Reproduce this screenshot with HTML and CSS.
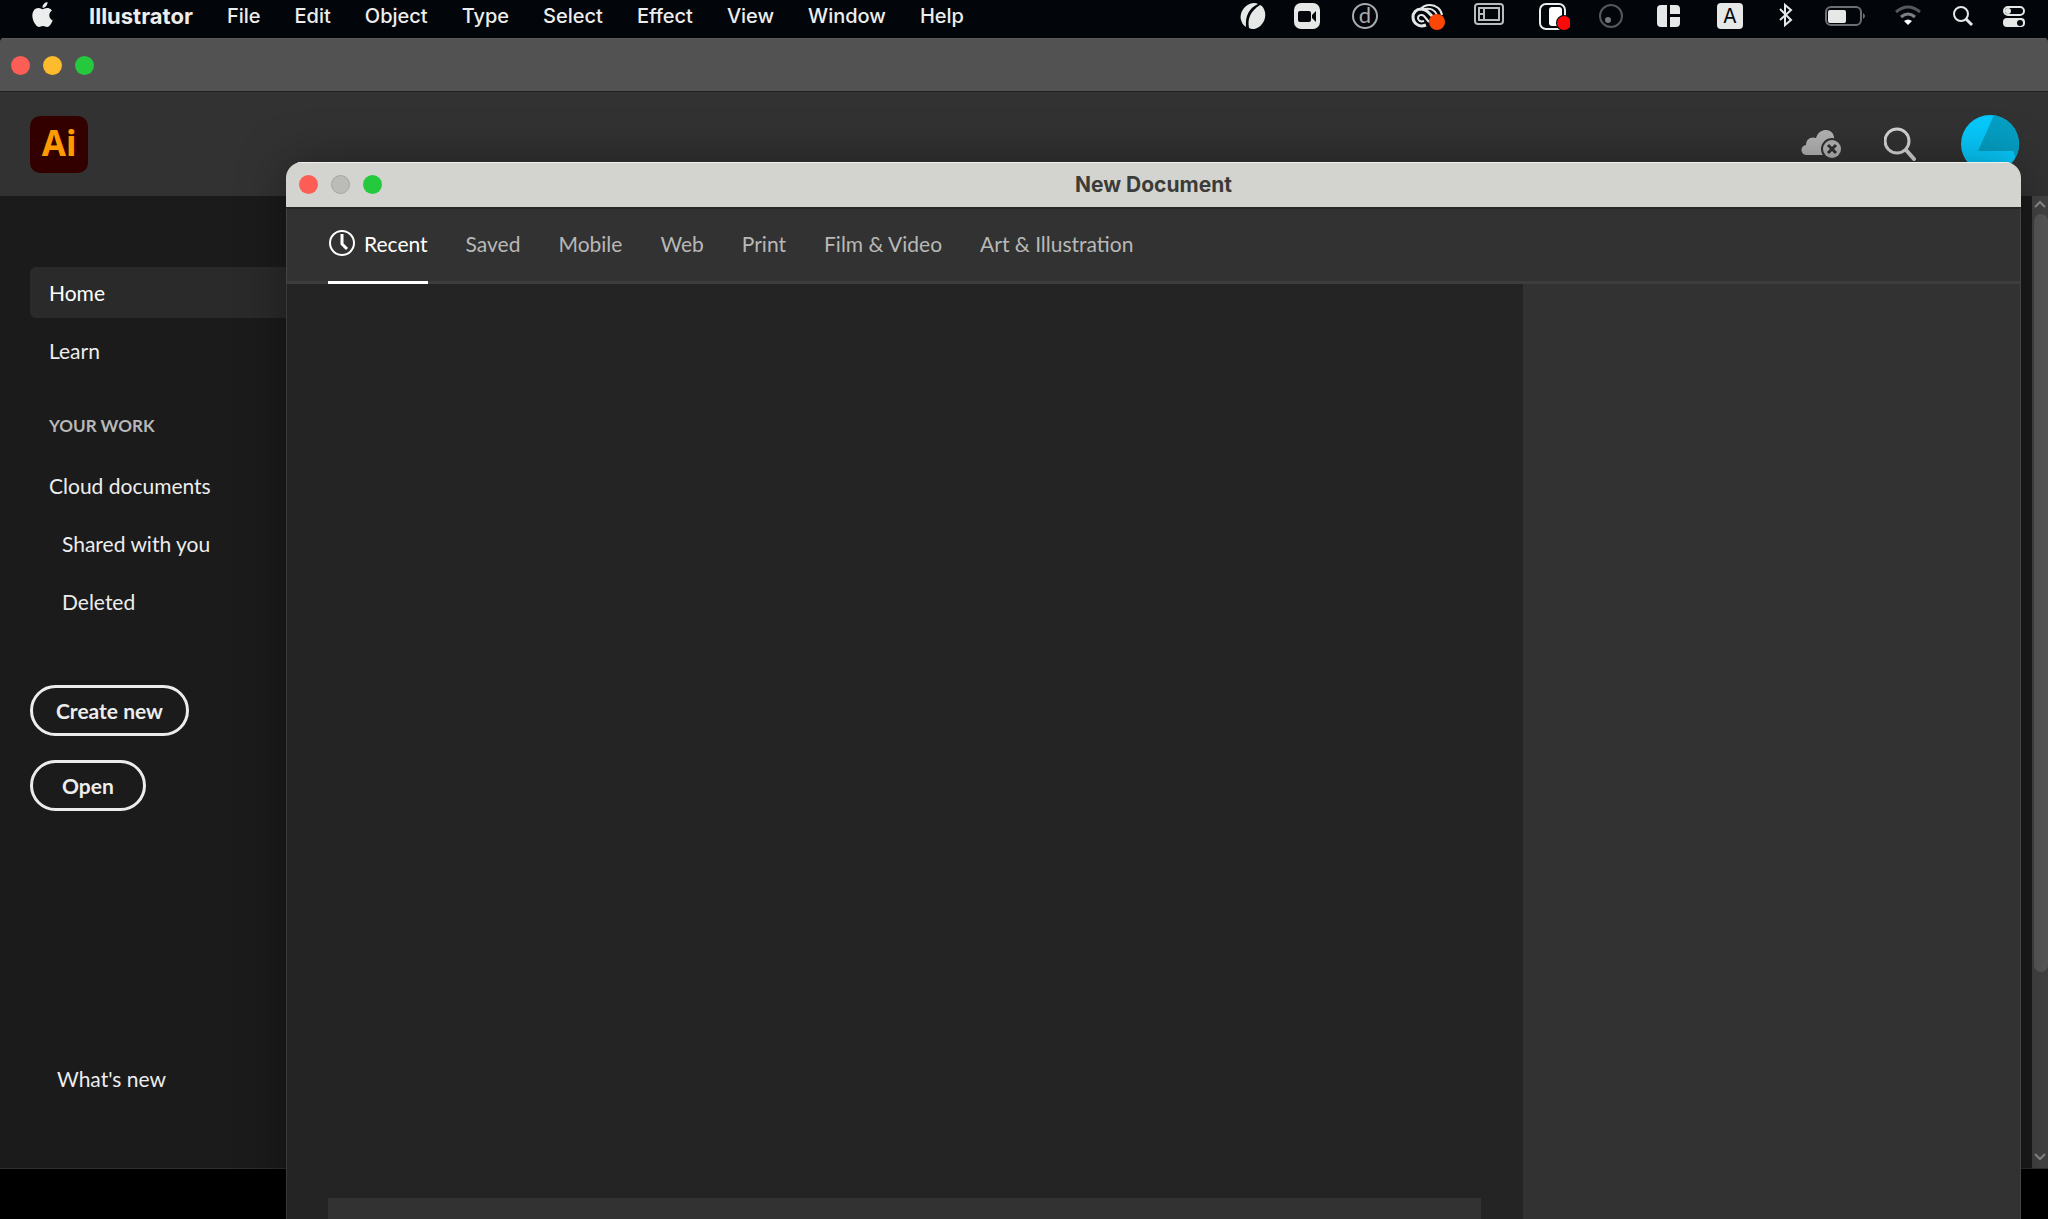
FILE: index.html
```html
<!DOCTYPE html>
<html lang="en">
<head>
  <meta charset="UTF-8" />
  <meta name="viewport" content="width=device-width, initial-scale=1.0" />
  <title>Illustrator</title>
  <link rel="stylesheet" href="styles.css">
</head>
<body>
  <header class="menubar">
    <nav class="menus">
      <button class="menu" aria-label="Apple">
        <svg width="25" height="25" viewBox="0 0 24 24" fill="#eceeee"><path d="M12.152 6.896c-.948 0-2.415-1.078-3.96-1.04-2.04.027-3.91 1.183-4.961 3.014-2.117 3.675-.546 9.103 1.519 12.09 1.013 1.454 2.208 3.09 3.792 3.039 1.52-.065 2.09-.987 3.935-.987 1.831 0 2.35.987 3.96.948 1.637-.026 2.676-1.48 3.676-2.948 1.156-1.688 1.636-3.325 1.662-3.415-.039-.013-3.182-1.221-3.22-4.857-.026-3.04 2.48-4.494 2.597-4.559-1.429-2.09-3.623-2.324-4.39-2.376-2-.156-3.675 1.09-4.61 1.09zM15.53 3.83c.843-1.012 1.4-2.427 1.245-3.83-1.207.052-2.662.805-3.532 1.818-.78.896-1.454 2.338-1.273 3.714 1.338.104 2.715-.688 3.559-1.701"/></svg>
      </button>
      <button class="menu app-name">Illustrator</button>
      <button class="menu">File</button>
      <button class="menu">Edit</button>
      <button class="menu">Object</button>
      <button class="menu">Type</button>
      <button class="menu">Select</button>
      <button class="menu">Effect</button>
      <button class="menu">View</button>
      <button class="menu">Window</button>
      <button class="menu">Help</button>
    </nav>

    <div class="status">
      <!-- leaf -->
      <svg width="26" height="32" viewBox="0 0 26 32" fill="#e6e8e8">
        <path d="M18 4C15 2 9 3 5 7c-4 4-5 9-4 13 1 3 2 5 5 7C5 16 9 8 18 4z"/>
        <path d="M20 5C11 11 7 18 9 28c3 2 7 1 10-1 5-4 7-9 6-15-1-3-2-6-5-7z"/>
      </svg>
      <!-- video call -->
      <svg width="28" height="32" viewBox="0 0 28 32">
        <rect x="0" y="3" width="26" height="26" rx="7" fill="#e6e8e8"/>
        <rect x="4" y="11" width="13" height="11" rx="2" fill="#05070c"/>
        <path d="M18 15l4-4v11l-4-4z" fill="#05070c"/>
      </svg>
      <!-- d in a ring -->
      <svg width="32" height="32" viewBox="0 0 32 32">
        <circle cx="15" cy="16" r="12" fill="none" stroke="#a9abad" stroke-width="2"/>
        <text class="ring-letter" x="15" y="23" text-anchor="middle">d</text>
      </svg>
      <!-- creative cloud -->
      <svg width="36" height="32" viewBox="0 0 36 32" fill="none">
        <path d="M10 10C12 7 16 5 20 5c6 0 11 4 12 10" stroke="#e6e8e8" stroke-width="2"/>
        <path d="M16 25c-7 3-13-2-13-8 0-4 3-8 8-8 3 0 5 1 7 3l5 5" stroke="#e6e8e8" stroke-width="3"/>
        <path d="M19 22l-5-6c-2-2-6-1-6 2s3 4 6 3M15 9c5-1 10 1 12 6" stroke="#e6e8e8" stroke-width="2"/>
        <circle cx="27" cy="22" r="8" fill="#fb4705"/>
      </svg>
      <!-- display -->
      <svg width="30" height="32" viewBox="0 0 30 32" fill="none" stroke="#b9bbbd" stroke-width="2">
        <rect x="1" y="4" width="28" height="20" rx="3"/>
        <rect x="5" y="8" width="20" height="12"/>
        <path d="M10 8v12M6 14h3"/>
      </svg>
      <!-- recorder -->
      <svg width="38" height="32" viewBox="0 0 38 32">
        <rect x="8" y="4" width="25" height="25" rx="6" fill="none" stroke="#eceeee" stroke-width="2"/>
        <rect x="17" y="7" width="13" height="19" rx="3" fill="#fff"/>
        <circle cx="32" cy="23" r="8" fill="#05070c"/>
        <circle cx="32" cy="23" r="7" fill="#fb0a0a"/>
      </svg>
      <!-- dial -->
      <svg width="26" height="32" viewBox="0 0 26 32">
        <circle cx="13" cy="16" r="11" fill="none" stroke="#55575d" stroke-width="2"/>
        <circle cx="10" cy="20" r="3" fill="#76787e"/>
      </svg>
      <!-- tiles -->
      <svg width="32" height="32" viewBox="0 0 32 32" fill="#e6e8e8">
        <path d="M9 5h6v22H9a4 4 0 0 1-4-4V9a4 4 0 0 1 4-4zM18 5h6a4 4 0 0 1 4 4v5H18zM18 17h10v6a4 4 0 0 1-4 4h-6z"/>
      </svg>
      <!-- input source -->
      <svg width="36" height="32" viewBox="0 0 36 32">
        <rect x="5" y="3" width="26" height="26" rx="4" fill="#e6e8e8"/>
        <text class="source-letter" x="18" y="23" text-anchor="middle">A</text>
      </svg>
      <!-- bluetooth -->
      <svg width="20" height="32" viewBox="0 0 20 32" fill="none" stroke="#e6e8e8" stroke-width="2">
        <path d="M4 9l11 11-6 5V5l6 5L4 20"/>
      </svg>
      <!-- battery -->
      <svg width="42" height="32" viewBox="0 0 42 32">
        <rect x="2" y="7" width="35" height="18" rx="5" fill="none" stroke="#6d6f74" stroke-width="2"/>
        <rect x="4" y="10" width="18" height="13" rx="2" fill="#e6e8e8"/>
        <path d="M39 13q4 3 0 6z" fill="#6d6f74"/>
      </svg>
      <!-- wifi -->
      <svg width="28" height="32" viewBox="0 0 28 32" fill="none" stroke-width="3">
        <path d="M2 12q12-10 24 0" stroke="#55575d"/>
        <path d="M7 17q7-6 14 0" stroke="#7e8085"/>
        <path d="M14 25l-4-4q4-3 8 0z" fill="#fff"/>
      </svg>
      <!-- search -->
      <svg width="24" height="32" viewBox="0 0 24 32" fill="none" stroke="#e6e8e8" stroke-width="2">
        <circle cx="11" cy="14" r="7"/>
        <path d="M16 19l6 6" stroke-width="3"/>
      </svg>
      <!-- control centre -->
      <svg width="24" height="32" viewBox="0 0 24 32">
        <rect x="2" y="7" width="20" height="8" rx="4" fill="none" stroke="#e6e8e8" stroke-width="2"/>
        <circle cx="6" cy="11" r="3" fill="#e6e8e8"/>
        <rect x="1" y="18" width="22" height="9" rx="4" fill="#e6e8e8"/>
        <circle cx="18" cy="23" r="3" fill="#05070c"/>
      </svg>
    </div>
  </header>

  <main class="app-window">
    <div class="titlebar">
      <button class="light red" aria-label="Close"></button>
      <button class="light yellow" aria-label="Minimize"></button>
      <button class="light green" aria-label="Zoom"></button>
    </div>

    <div class="app-header">
      <div class="logo">Ai</div>
      <div class="header-tools">
        <button class="tool" aria-label="Cloud storage status">
          <svg width="40" height="34" viewBox="0 0 40 34">
            <path d="M6 28a5 5 0 0 1-1-10c0-6 5-9 10-7C17 5 21 3 25 3c6 0 9 5 8 11v14z" fill="#b4b4b4"/>
            <circle cx="31" cy="22" r="11" fill="#323232"/>
            <circle cx="31" cy="22" r="9" fill="#b4b4b4"/>
            <path d="M27 18l8 8M35 18l-8 8" stroke="#323232" stroke-width="3"/>
          </svg>
        </button>
        <button class="tool" aria-label="Search">
          <svg width="34" height="34" viewBox="0 0 34 34" fill="none" stroke="#d4d4d4" stroke-width="3" stroke-linecap="round">
            <circle cx="13" cy="14" r="12"/>
            <path d="M22 23l8 9" stroke-width="4"/>
          </svg>
        </button>
        <button class="tool" aria-label="Account">
          <svg width="58" height="58" viewBox="0 0 58 58">
            <defs><clipPath id="avatar"><circle cx="29" cy="29" r="29"/></clipPath></defs>
            <g clip-path="url(#avatar)">
              <rect width="58" height="58" fill="#07c9fc"/>
              <path d="M33 0L17 36h35l6 14V0z" fill="#049fc4"/>
            </g>
          </svg>
        </button>
      </div>
    </div>

    <div class="workspace">
      <nav class="sidebar">
        <a class="nav-item active" href="#home">Home</a>
        <a class="nav-item" href="#learn">Learn</a>
        <h2 class="nav-heading">YOUR WORK</h2>
        <a class="nav-item" href="#cloud">Cloud documents</a>
        <a class="nav-item sub" href="#shared">Shared with you</a>
        <a class="nav-item sub" href="#deleted">Deleted</a>
        <div class="actions">
          <button class="pill">Create new</button>
          <button class="pill open">Open</button>
        </div>
        <a class="whats-new" href="#new">What's new</a>
      </nav>
      <div class="scrollbar">
        <svg width="16" height="18" viewBox="0 0 16 18" fill="none" stroke="#8c8c8c" stroke-width="2"><path d="M3 11l5-5 5 5"/></svg>
        <div class="thumb"></div>
        <svg width="16" height="22" viewBox="0 0 16 22" fill="none" stroke="#8c8c8c" stroke-width="2"><path d="M3 8l5 5 5-5"/></svg>
      </div>
    </div>
  </main>

  <section class="dialog" role="dialog" aria-labelledby="dialogTitle">
    <div class="dialog-titlebar">
      <button class="light red" aria-label="Close"></button>
      <button class="light grey" aria-label="Minimize"></button>
      <button class="light green" aria-label="Zoom"></button>
      <h1 class="dialog-title" id="dialogTitle">New Document</h1>
    </div>
    <div class="tabs" role="tablist">
      <button class="tab selected" role="tab" aria-selected="true">
        <svg width="27" height="27" viewBox="0 0 27 27" fill="none" stroke="#fff">
          <circle cx="14" cy="13" r="12" stroke-width="2"/>
          <path d="M14 4v10l5 5" stroke-width="3"/>
        </svg>
        Recent
      </button>
      <button class="tab" role="tab">Saved</button>
      <button class="tab" role="tab">Mobile</button>
      <button class="tab" role="tab">Web</button>
      <button class="tab" role="tab">Print</button>
      <button class="tab" role="tab">Film &amp; Video</button>
      <button class="tab" role="tab">Art &amp; Illustration</button>
    </div>
    <div class="dialog-body">
      <div class="presets"><div class="preset-footer"></div></div>
      <aside class="details"></aside>
    </div>
  </section>
</body>
</html>
```
FILE: styles.css
```css
* {
  box-sizing: border-box;
  margin: 0;
  padding: 0;
}
body {
  background: #000;
  color: #ededed;
  display: flex;
  flex-direction: column;
  min-height: 100vh;
  position: relative;
  overflow: hidden;
  font-family: Lato, sans-serif;
  font-size: 21px;
}
button {
  background: none;
  border: none;
  color: inherit;
  font: inherit;
  cursor: pointer;
}
a {
  color: inherit;
  text-decoration: none;
}
svg {
  display: block;
}

/* system menu bar */
.menubar {
  display: flex;
  justify-content: space-between;
  height: 38px;
  padding: 0 22px 6px 30px;
  background: #02050a;
  font-family: Inter, sans-serif;
}
.menus {
  display: flex;
  align-items: center;
  gap: 34px;
}
.menu {
  font-size: 20px;
  font-weight: 500;
  line-height: 32px;
}
.app-name {
  font-size: 22px;
  font-weight: 700;
}
.menu svg {
  margin-top: -4px;
}
.status {
  display: flex;
  align-items: center;
  gap: 28px;
}
.ring-letter {
  font: 22px Lato, sans-serif;
  fill: #a9abad;
}
.source-letter {
  font: 20px Inter, sans-serif;
  fill: #05070c;
}

/* main window */
.app-window {
  flex: 1;
  display: flex;
  flex-direction: column;
  margin-bottom: 50px;
  border-bottom: 1px solid #2e2e2e;
  border-radius: 4px 4px 0 0;
  background: #1b1b1b;
  overflow: hidden;
}
.titlebar {
  display: flex;
  align-items: center;
  gap: 13px;
  height: 54px;
  padding: 1px 11px 0;
  background: #525252;
  border-top: 1px solid #5a5a5a;
  border-bottom: 1px solid #202020;
}
.light {
  width: 19px;
  height: 19px;
  border-radius: 50%;
}
.red {
  background: #fc5e55;
}
.yellow {
  background: #fdbb2d;
}
.green {
  background: #25c93e;
}
.grey {
  background: #bbbcb7;
  border: 1px solid #a5a6a2;
}
.app-header {
  display: flex;
  align-items: center;
  justify-content: space-between;
  height: 104px;
  padding: 0 29px 0 30px;
  background: #323232;
}
.logo {
  width: 58px;
  height: 57px;
  border-radius: 10px;
  background: #330000;
  color: #ff9a00;
  font: 700 35px/54px "Noto Sans", sans-serif;
  text-align: center;
}
.header-tools {
  display: flex;
  align-items: center;
  gap: 43px;
}
.workspace {
  flex: 1;
  display: flex;
  justify-content: space-between;
}
.sidebar {
  display: flex;
  flex-direction: column;
  width: 300px;
  padding: 71px 0 71px 30px;
}
.nav-item {
  height: 51px;
  margin-bottom: 7px;
  padding-left: 19px;
  border-radius: 6px;
  line-height: 51px;
}
.active {
  background: #2a2a2a;
  color: #fff;
}
.sub {
  padding-left: 32px;
}
.nav-heading {
  margin: 27px 0 18px;
  padding-left: 19px;
  color: #b8b8b8;
  font-size: 17px;
  font-weight: 700;
  line-height: 32px;
}
.actions {
  display: flex;
  flex-direction: column;
  align-items: flex-start;
  gap: 24px;
  margin-top: 51px;
}
.pill {
  height: 51px;
  padding: 0 23px;
  border: 3px solid #ececec;
  border-radius: 26px;
  font-weight: 700;
}
.open {
  padding: 0 29px;
}
.whats-new {
  margin-top: auto;
  padding-left: 27px;
  line-height: 36px;
}
.scrollbar {
  display: flex;
  flex-direction: column;
  width: 16px;
  background: #434343;
}
.thumb {
  height: 78%;
  margin: 0 0 auto 2px;
  border-radius: 8px;
  background: #585858;
}

/* dialog floating over the main window */
.dialog {
  position: absolute;
  top: 162px;
  right: 27px;
  bottom: 0;
  left: 286px;
  display: flex;
  flex-direction: column;
  border-radius: 16px 16px 0 0;
  box-shadow: 0 0 50px rgba(0, 0, 0, 0.35);
  overflow: hidden;
}
.dialog-titlebar {
  display: flex;
  align-items: center;
  gap: 13px;
  height: 45px;
  padding: 0 13px 1px;
  border-top: 1px solid #f0f0ec;
  background: #d3d4cf;
}
.dialog-title {
  flex: 1;
  padding-right: 96px;
  color: #3b3c39;
  font: 700 21px/40px Inter, sans-serif;
  text-align: center;
}
.tabs {
  display: flex;
  gap: 38px;
  height: 77px;
  padding: 0 41px;
  background: #323232;
  border-top: 2px solid #252525;
  border-left: 1px solid #444;
  border-right: 1px solid #444;
  box-shadow: inset 0 -3px #3d3d3d;
}
.tab {
  display: flex;
  align-items: center;
  gap: 9px;
  padding-bottom: 3px;
  border-bottom: 3px solid transparent;
  color: #b8b8b8;
}
.selected {
  border-color: #fff;
  color: #fff;
}
.dialog-body {
  flex: 1;
  display: flex;
  border-left: 1px solid #383838;
  border-right: 1px solid #444;
  background: #242424;
}
.presets {
  flex: 1;
  display: flex;
  align-items: flex-end;
  padding: 0 42px 0 41px;
}
.preset-footer {
  flex: 1;
  height: 21px;
  background: #323232;
}
.details {
  width: 497px;
  background: #323232;
}
```
